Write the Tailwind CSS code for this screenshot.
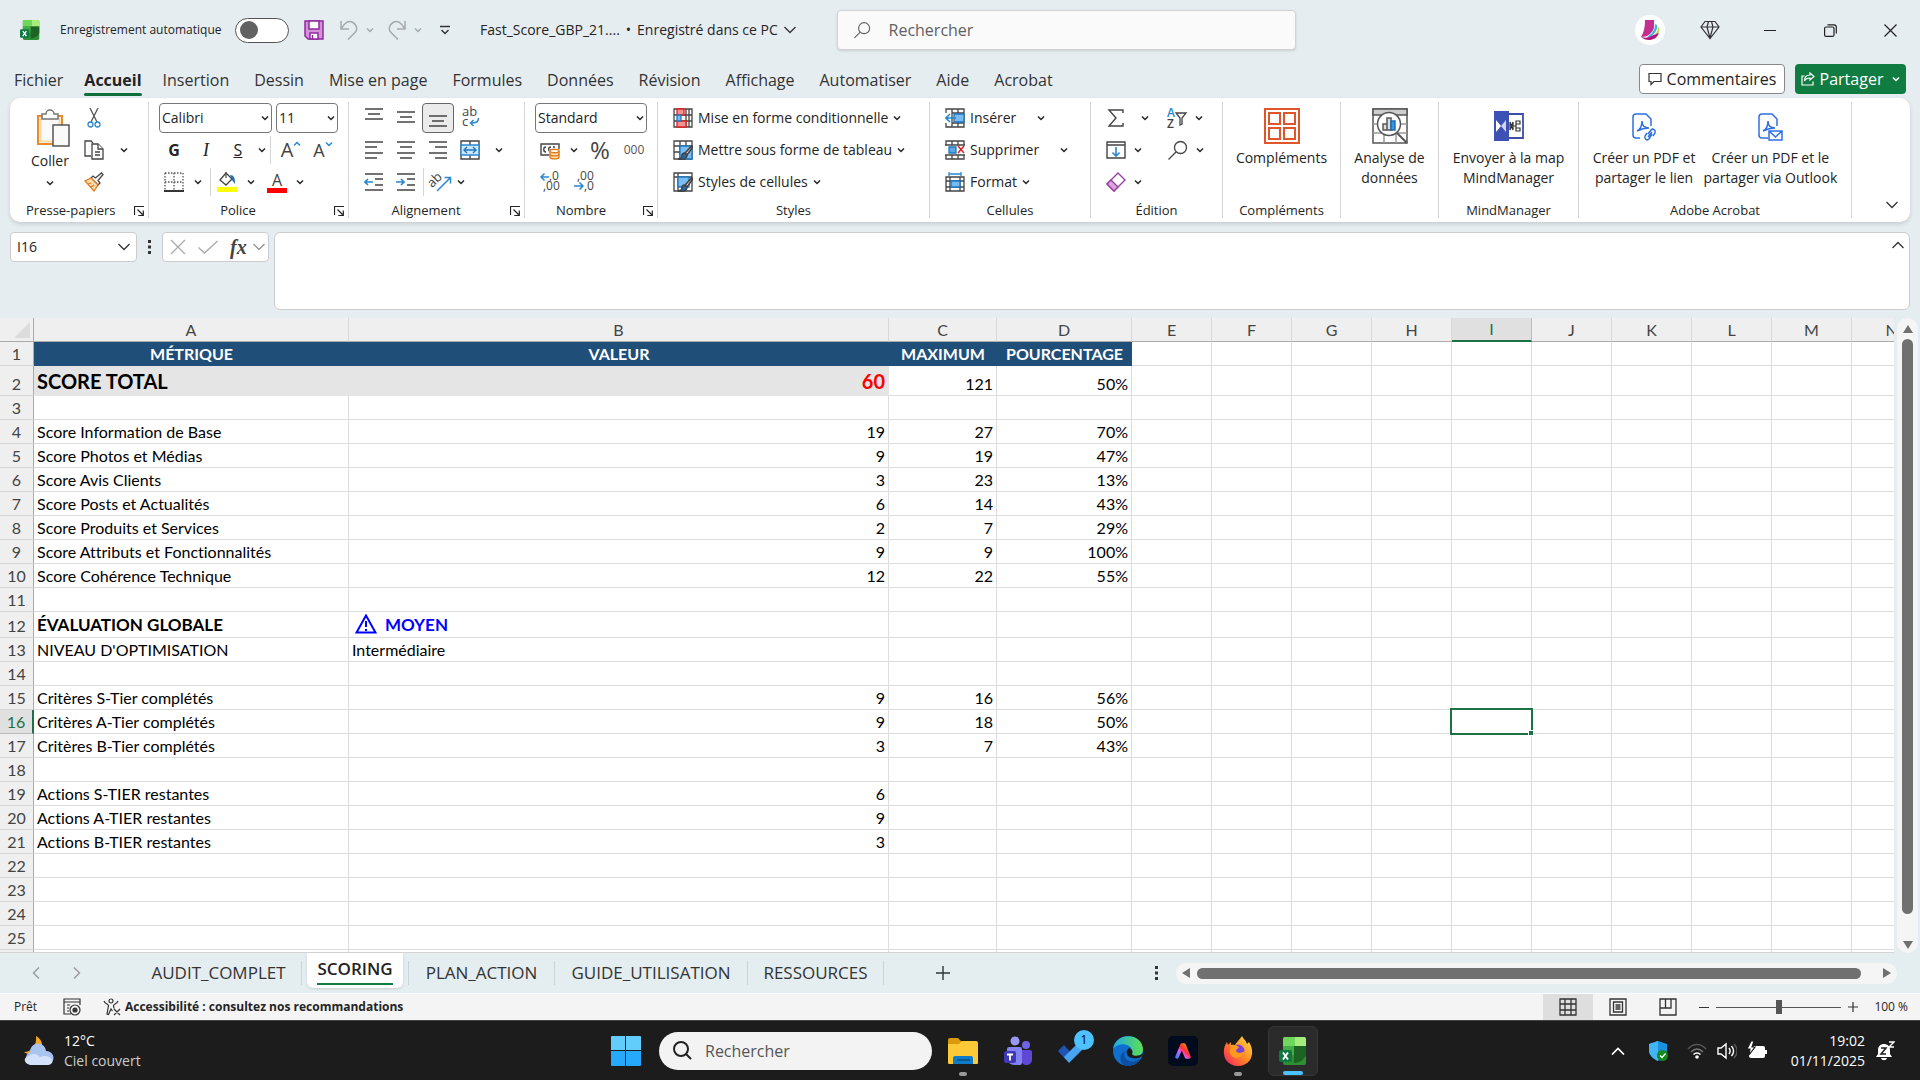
<!DOCTYPE html>
<html lang="fr">
<head>
  <meta charset="UTF-8" />
  <meta name="viewport" content="width=device-width, initial-scale=1.0" />
  <title>Fast_Score_GBP_21 - Excel</title>
  <script src="https://cdn.jsdelivr.net/npm/@tailwindcss/browser@4"></script>
</head>
<body class="flex h-screen flex-col overflow-hidden bg-[#e6edf1] font-['Open_Sans',sans-serif] text-sm text-[#242424]">

  <!-- Symboles réutilisés -->
  <svg class="hidden">
    <symbol id="chev" viewBox="0 0 8 8"><path d="M1 2.5l3 3 3-3" fill="none" stroke="currentColor" stroke-width="1.5" /></symbol>
    <symbol id="launch" viewBox="0 0 10 10"><path d="M.5 9V.5H10M3.500 3.500L9 9M9.300 4.500v5h-5" fill="none" stroke="currentColor" stroke-width="1.200" /></symbol>
    <symbol id="brush" viewBox="0 0 12 12"><path d="M11.500.5L6 6.500l1.500 1.500L12 2z" fill="#fff" stroke="#444" /><path d="M6 6.500c-2 0-2.500 1-2.500 2.500S2 11 .5 11c3 1.500 7 .5 7-3z" fill="#1e6fb8" /></symbol>
    <symbol id="excel" viewBox="0 0 28 28">
      <path d="M6 0h19a2 2 0 0 1 2 2v24a2 2 0 0 1-2 2H6a2 2 0 0 1-2-2V2a2 2 0 0 1 2-2z" fill="#2f8f35" />
      <path d="M4 2a2 2 0 0 1 2-2h10v9H4z" fill="#6fd85c" /><path d="M16 0h9a2 2 0 0 1 2 2v7H16z" fill="#a6ec7c" /><path d="M4 9h11v9H4z" fill="#45ad46" />
      <path d="M15 9h12v9c-2 6-9 8-12 8z" fill="#1c6324" />
      <rect x="0" y="13" width="13" height="12" rx="2" fill="#107840" />
      <path d="M4 15.500l5 7M9 15.500l-5 7" stroke="#fff" stroke-width="1.900" />
    </symbol>
  </svg>

  <!-- Barre de titre -->
  <header class="flex h-[60px] shrink-0 items-center pr-[15px] pl-5">
    <svg class="size-5"><use href="#excel" /></svg>
    <label for="autosave" class="ml-5 w-[175px] text-xs whitespace-nowrap">Enregistrement automatique</label>
    <input id="autosave" type="checkbox" class="peer sr-only" />
    <label for="autosave" class="flex h-[25px] w-[54px] items-center rounded-full border border-[#555] bg-white px-1" aria-label="Enregistrement automatique">
      <span class="size-[18px] rounded-full bg-[#616161]"></span>
    </label>
    <button class="ml-[15px]" aria-label="Enregistrer">
      <svg class="size-5" viewBox="0 0 20 20"><path d="M1 1h18v18H4l-3-3z" fill="#d491d8" stroke="#8e2a9e" stroke-width="1.500" /><path d="M5 1h10v8H5zM6 13h8v6H6z" fill="#fff" stroke="#8e2a9e" stroke-width="1.500" /><path d="M8.500 15v4" stroke="#8e2a9e" stroke-width="1.500" /></svg>
    </button>
    <button class="ml-4 flex items-center gap-2 text-[#a5a9ad]" aria-label="Annuler">
      <svg class="h-5 w-[18px]" viewBox="0 0 18 20" fill="none" stroke="currentColor" stroke-width="1.500"><path d="M1 1v8h8M1.500 8.500C5 2 9 0 13 2.500c4 2.500 5 7 2 10L8 19.500" /></svg>
      <svg class="size-2"><use href="#chev" /></svg>
    </button>
    <button class="ml-[14px] flex items-center gap-2 text-[#a5a9ad]" aria-label="Rétablir">
      <svg class="h-5 w-[18px]" viewBox="0 0 18 20" fill="none" stroke="currentColor" stroke-width="1.500"><path d="M17 1v8H9M16.500 8.500C13 2 9 0 5 2.500c-4 2.500-5 7-2 10L10 19.500" /></svg>
      <svg class="size-2"><use href="#chev" /></svg>
    </button>
    <button class="ml-[18px]" aria-label="Personnaliser la barre d'outils">
      <svg class="size-[10px]" viewBox="0 0 10 10" fill="none" stroke="#333" stroke-width="1.400"><path d="M0 1.500h10M1.500 5L5 8.500 8.500 5" /></svg>
    </button>
    <button class="ml-[30px] flex w-[330px] items-center gap-[6px] whitespace-nowrap">
      <span>Fast_Score_GBP_21....</span><span>•</span><span>Enregistré dans ce PC</span>
      <svg class="size-3" viewBox="0 0 12 8" fill="none" stroke="#333" stroke-width="1.300"><path d="M.5 1L6 6.500 11.500 1" /></svg>
    </button>
    <label class="ml-[27px] flex h-10 w-[459px] items-center gap-[18px] rounded border border-[#d0d3d5] bg-[#fafafa] px-4 shadow-sm">
      <svg class="size-[18px]" viewBox="0 0 18 18" fill="none" stroke="#616161" stroke-width="1.200"><circle cx="11" cy="7" r="6" /><path d="M6.500 11.500L.5 17.500" /></svg>
      <input type="search" placeholder="Rechercher" aria-label="Rechercher" class="w-full text-base outline-none placeholder:text-[#616161]" />
    </label>
    <div class="ml-auto flex items-center gap-[30px]">
      <button class="flex size-[30px] items-center justify-center rounded-full bg-white" aria-label="Compte">
        <svg class="size-[22px]" viewBox="0 0 22 22"><path d="M6 1h9c0 6 1 9-3 13-3 3-6 4-10 4 3-5 4-10 4-17z" fill="#c3308f" /><path d="M16 5c0 6-3 10-8 13h3c5-3 8-8 7-12z" fill="#3fb5e5" /><path d="M19 8c0 5-3 8-7 11h2c4-2 7-6 6-10z" fill="#b5d334" /><path d="M2 18c4 1 7 1 10-1l8-3c-2 5-6 7-10 7-3 0-6-1-8-3z" fill="#b0157f" /></svg>
      </button>
      <button class="flex w-[30px] justify-center" aria-label="Premium">
        <svg class="size-5" viewBox="0 0 20 20" fill="none" stroke="#333" stroke-width="1.200"><path d="M5 1.500h10l4 5.500-9 11.500L1 7zM1 7h18M7 7l3 11 3-11-1.500-5.500M7 7l1.500-5.500" /></svg>
      </button>
      <button class="flex w-[30px] justify-center" aria-label="Réduire"><span class="h-px w-3 bg-[#222]"></span></button>
      <button class="flex w-[30px] justify-center" aria-label="Restaurer">
        <svg class="size-[13px]" viewBox="0 0 13 13" fill="none" stroke="#222" stroke-width="1.200"><rect x=".6" y="3" width="9.400" height="9.400" rx="1.500" /><path d="M3.500.8h6.500a2.300 2.300 0 0 1 2.300 2.300v6.400" /></svg>
      </button>
      <button class="flex w-[30px] justify-center" aria-label="Fermer">
        <svg class="size-[13px]" viewBox="0 0 13 13" stroke="#222" stroke-width="1.200"><path d="M.5.5l12 12M12.500.5l-12 12" /></svg>
      </button>
    </div>
  </header>

  <!-- Onglets du ruban -->
  <nav class="flex h-[38px] shrink-0 items-center justify-between pr-[14px] pl-[14px]">
    <div class="flex h-full items-center gap-[25px] pt-px text-base whitespace-nowrap text-[#333]">
      <a href="#">Fichier</a>
      <a href="#" class="relative -mx-1 font-bold text-[#222]">Accueil<span class="absolute inset-x-0 -bottom-1 h-[3px] rounded bg-[#0f703b]"></span></a>
      <a href="#">Insertion</a>
      <a href="#">Dessin</a>
      <a href="#">Mise en page</a>
      <a href="#">Formules</a>
      <a href="#">Données</a>
      <a href="#">Révision</a>
      <a href="#">Affichage</a>
      <a href="#">Automatiser</a>
      <a href="#">Aide</a>
      <a href="#">Acrobat</a>
    </div>
    <div class="flex gap-[10px] text-base">
      <button class="flex h-[30px] w-[146px] items-center justify-center gap-[5px] rounded border border-[#888] bg-white">
        <svg class="size-[14px]" viewBox="0 0 14 14" fill="none" stroke="#333" stroke-width="1.200"><path d="M1 1.500h12v8H6L3 12.500v-3H1z" /></svg>Commentaires
      </button>
      <button class="flex h-[30px] w-[111px] items-center justify-center gap-[5px] rounded bg-[#107c41] text-white">
        <svg class="size-[14px]" viewBox="0 0 14 14" fill="none" stroke="#fff" stroke-width="1.200"><path d="M3.500 4H1v9h11V9.500M9 1l4 3.500L9 8V6C6 6 4.500 7 3.500 9c0-4 2-6 5.500-6z" /></svg>Partager
        <svg class="ml-1 size-2"><use href="#chev" /></svg>
      </button>
    </div>
  </nav>

  <!-- Ruban -->
  <section class="mx-[10px] flex h-[124px] shrink-0 rounded-[10px] bg-white py-1 whitespace-nowrap shadow-[0_2px_4px_rgba(0,0,0,0.14)]">

    <!-- Presse-papiers -->
    <div class="flex w-[139px] shrink-0 flex-col border-r border-[#d5d5d5]">
      <div class="flex h-24 pl-[14px]">
        <button class="flex w-[52px] flex-col items-center pt-[7px]">
          <svg class="ml-[6px] h-[38px] w-[34px]" viewBox="0 0 34 38"><path d="M2 7h24v28H2z" fill="#fff" stroke="#e8892b" stroke-width="2" /><path d="M4.500 9.500h19v23h-19z" fill="#fafafa" stroke="#fbd9a5" stroke-width="2" /><path d="M6 10V5h4a4 4 0 0 1 8 0h4v5z" fill="#fff" stroke="#777" stroke-width="1.500" /><path d="M17 16h16v21H17z" fill="#fafafa" stroke="#555" stroke-width="1.500" /></svg>
          <span class="mt-1 leading-5">Coller</span>
          <svg class="mt-2 size-2"><use href="#chev" /></svg>
        </button>
        <div class="flex flex-col pl-[6px]">
          <button class="flex h-8 w-6 items-center justify-center" aria-label="Couper">
            <svg class="h-5 w-[14px]" viewBox="0 0 14 20" fill="none" stroke-width="1.300"><path d="M3 0l7 14M11 0L4 14" stroke="#555" /><circle cx="3.500" cy="16.500" r="2.500" stroke="#2b88cf" /><circle cx="10.500" cy="16.500" r="2.500" stroke="#2b88cf" /></svg>
          </button>
          <div class="flex h-8 items-center gap-[14px]">
            <button class="flex w-6 items-center justify-center" aria-label="Copier">
              <svg class="size-5" viewBox="0 0 20 20" fill="#fff" stroke="#444" stroke-width="1.300"><path d="M7 16H1V1h6l2 2" /><path d="M8 4h6l5 5v10H8z" /><path d="M14 4v5h5M11 12h5M11 15h5" /></svg>
            </button>
            <svg class="size-2"><use href="#chev" /></svg>
          </div>
          <button class="flex h-8 w-6 items-center justify-center" aria-label="Reproduire la mise en forme">
            <svg class="size-5" viewBox="0 0 20 20" fill="#fff" stroke-width="1.300"><path d="M19 2.500L17.500 1l-6 5L9 4 7 6l7 7 2-2-2-2.500z" stroke="#444" /><path d="M7 6L1 9l9 10 4-6z" fill="#fbdcae" stroke="#e07b1a" /><path d="M4 12l3-1M7 15l3-2" stroke="#e07b1a" /></svg>
          </button>
        </div>
      </div>
      <div class="flex h-5 items-end justify-between pr-1 pl-4 text-[13px] leading-4">Presse-papiers<button class="pb-[2px]" aria-label="Options du presse-papiers"><svg class="size-[10px]"><use href="#launch" /></svg></button></div>
    </div>

    <!-- Police -->
    <div class="flex w-[200px] shrink-0 flex-col border-r border-[#d5d5d5]">
      <div class="flex h-8 items-center gap-1 px-[10px]">
        <div class="relative flex-1">
          <select aria-label="Police" class="h-[30px] w-full appearance-none rounded border border-[#777] bg-white px-[2px]"><option>Calibri</option></select>
          <svg class="pointer-events-none absolute top-[11px] right-[3px] size-2"><use href="#chev" /></svg>
        </div>
        <div class="relative">
          <select aria-label="Taille de police" class="h-[30px] w-[62px] appearance-none rounded border border-[#777] bg-white px-[2px]"><option>11</option></select>
          <svg class="pointer-events-none absolute top-[11px] right-[3px] size-2"><use href="#chev" /></svg>
        </div>
      </div>
      <div class="flex h-8 items-center pl-[9px] text-base">
        <button class="w-8 font-bold">G</button>
        <button class="w-8 font-['Liberation_Serif',serif] text-lg italic">I</button>
        <button class="w-8 underline">S</button>
        <svg class="mx-1 size-2"><use href="#chev" /></svg>
        <span class="mr-1 h-7 w-px bg-[#d5d5d5]"></span>
        <button class="flex w-8 justify-center text-xl text-[#444]" aria-label="Augmenter la taille">A<svg class="mt-1 size-2 rotate-180 text-[#2b88cf]"><use href="#chev" /></svg></button>
        <button class="flex w-8 justify-center text-lg text-[#444]" aria-label="Réduire la taille">A<svg class="mt-1 size-2 text-[#2b88cf]"><use href="#chev" /></svg></button>
      </div>
      <div class="flex h-8 items-center pl-[9px]">
        <button class="flex w-8 justify-center" aria-label="Bordures">
          <svg class="size-5" viewBox="0 0 20 20" fill="none" stroke="#555" stroke-width="1.300"><path d="M1 1h18v18M1 1v18M10 1v18M1 10h18" stroke-dasharray="1.500 1.500" /><path d="M0 19h20" stroke="#333" stroke-width="2" /></svg>
        </button>
        <svg class="mx-1 size-2"><use href="#chev" /></svg>
        <span class="mx-1 h-7 w-px bg-[#d5d5d5]"></span>
        <button class="flex w-6 justify-center" aria-label="Couleur de remplissage">
          <svg class="size-5" viewBox="0 0 20 20" fill="none"><path d="M9 1l6 6-6 6-6-5z" stroke="#444" stroke-width="1.300" fill="#fff" /><path d="M9 0v6" stroke="#444" stroke-width="1.200" /><path d="M13 3c4 0 5 3 5 9l-3-4z" fill="#1e6fb8" /><path d="M0 15h20v5H0z" fill="#ff0" /></svg>
        </button>
        <svg class="mr-3 ml-2 size-2"><use href="#chev" /></svg>
        <button class="flex w-5 flex-col items-center text-[#444]" aria-label="Couleur de police"><span class="text-base leading-4">A</span><span class="h-[5px] w-5 bg-[#f00]"></span></button>
        <svg class="ml-[9px] size-2"><use href="#chev" /></svg>
      </div>
      <div class="flex h-5 items-end justify-between pr-1 text-[13px] leading-4"><span class="w-[178px] text-center">Police</span><button class="pb-[2px]" aria-label="Options de police"><svg class="size-[10px]"><use href="#launch" /></svg></button></div>
    </div>

    <!-- Alignement -->
    <div class="flex w-[176px] shrink-0 flex-col border-r border-[#d5d5d5]">
      <div class="flex h-8 items-center pl-[9px]">
        <button class="flex w-8 justify-center" aria-label="Aligner en haut"><svg class="size-5" viewBox="0 0 20 20" stroke="#444" stroke-width="1.400"><path d="M1 1h18M4 6h12M1 11h18" /></svg></button>
        <button class="flex w-8 justify-center" aria-label="Aligner au centre verticalement"><svg class="size-5" viewBox="0 0 20 20" stroke="#444" stroke-width="1.400"><path d="M1 4h18M4 9h12M1 14h18" /></svg></button>
        <button class="flex h-[30px] w-8 items-center justify-center rounded border border-[#666] bg-[#ebebeb]" aria-label="Aligner en bas"><svg class="size-5" viewBox="0 0 20 20" stroke="#444" stroke-width="1.400"><path d="M1 8h18M4 13h12M1 18h18" /></svg></button>
        <button class="flex w-8 justify-center text-[#444]" aria-label="Renvoyer à la ligne"><svg class="size-5 overflow-visible" viewBox="0 0 20 20" fill="none"><text x="2" y="8" font-size="13" fill="#444">ab</text><text x="2" y="18" font-size="13" fill="#444">c</text><path d="M18.500 10c0 4-2 5-8 5M13.500 12l-3 3 3 3" stroke="#2b88cf" stroke-width="1.500" /></svg></button>
      </div>
      <div class="flex h-8 items-center pl-[9px]">
        <button class="flex w-8 justify-center" aria-label="Aligner à gauche"><svg class="size-5" viewBox="0 0 20 20" stroke="#444" stroke-width="1.400"><path d="M1 2h18M1 7h12M1 13h18M1 18h12" /></svg></button>
        <button class="flex w-8 justify-center" aria-label="Centrer"><svg class="size-5" viewBox="0 0 20 20" stroke="#444" stroke-width="1.400"><path d="M1 2h18M4 7h12M1 13h18M4 18h12" /></svg></button>
        <button class="flex w-8 justify-center" aria-label="Aligner à droite"><svg class="size-5" viewBox="0 0 20 20" stroke="#444" stroke-width="1.400"><path d="M1 2h18M7 7h12M1 13h18M7 18h12" /></svg></button>
        <button class="flex w-8 justify-center" aria-label="Fusionner et centrer"><svg class="size-5" viewBox="0 0 20 20" fill="none" stroke="#444" stroke-width="1.400"><path d="M1 1h18v18H1zM10 1v4M10 15v4" /><path d="M1 5h18v10H1z" fill="#cfe6f8" stroke="#2b88cf" /><path d="M4 10h12M7 7l-3 3 3 3M13 7l3 3-3 3" stroke="#1e78c0" /></svg></button>
        <svg class="ml-[9px] size-2"><use href="#chev" /></svg>
      </div>
      <div class="flex h-8 items-center pl-[9px]">
        <button class="flex w-8 justify-center" aria-label="Diminuer le retrait"><svg class="size-5" viewBox="0 0 20 20" fill="none" stroke="#444" stroke-width="1.400"><path d="M1 2h18M11 7h8M11 13h8M1 18h18" /><path d="M9 10H1M4 7l-3 3 3 3" stroke="#2b88cf" stroke-width="1.700" /></svg></button>
        <button class="flex w-8 justify-center" aria-label="Augmenter le retrait"><svg class="size-5" viewBox="0 0 20 20" fill="none" stroke="#444" stroke-width="1.400"><path d="M1 2h18M11 7h8M11 13h8M1 18h18" /><path d="M0 10h8M5 7l3 3-3 3" stroke="#2b88cf" stroke-width="1.700" /></svg></button>
        <span class="mx-[1px] h-7 w-px bg-[#d5d5d5]"></span>
        <button class="flex w-8 justify-center" aria-label="Orientation"><svg class="size-5 overflow-visible" viewBox="0 0 20 20" fill="none"><text x="-1" y="13" font-size="13" fill="#444" transform="rotate(-45 4 12)">ab</text><path d="M6 19L19 6M13.500 5.500H19.500v6" stroke="#2b88cf" stroke-width="1.500" /></svg></button>
        <svg class="size-2"><use href="#chev" /></svg>
      </div>
      <div class="flex h-5 items-end justify-between pr-1 text-[13px] leading-4"><span class="w-[154px] text-center">Alignement</span><button class="pb-[2px]" aria-label="Options d'alignement"><svg class="size-[10px]"><use href="#launch" /></svg></button></div>
    </div>

    <!-- Nombre -->
    <div class="flex w-[133px] shrink-0 flex-col border-r border-[#d5d5d5]">
      <div class="flex h-8 items-center px-[10px]">
        <div class="relative w-full">
          <select aria-label="Format de nombre" class="h-[30px] w-full appearance-none rounded border border-[#777] bg-white px-[2px]"><option>Standard</option></select>
          <svg class="pointer-events-none absolute top-[11px] right-[3px] size-2"><use href="#chev" /></svg>
        </div>
      </div>
      <div class="flex h-8 items-center pl-[9px]">
        <button class="flex w-8 justify-center" aria-label="Format comptable"><svg class="size-5" viewBox="0 0 20 20" fill="none" stroke="#444" stroke-width="1.400"><path d="M9 15H1V4h18v5" /><path d="M6 7C3 7 3 12 6 12M11 7c-2 0-3 1-2 4M15 7h-2" /><path d="M10 11v6c0 2.500 9 2.500 9 0v-6" fill="#fbdcae" stroke="#e07b1a" /><ellipse cx="14.500" cy="11" rx="4.500" ry="1.700" fill="#fff" stroke="#e07b1a" /><path d="M10 14c0 2.500 9 2.500 9 0" stroke="#e07b1a" /></svg></button>
        <svg class="mx-1 size-2"><use href="#chev" /></svg>
        <button class="w-9 text-center text-2xl leading-6 text-[#444]">%</button>
        <button class="w-8 text-xs text-[#555]">000</button>
      </div>
      <div class="flex h-8 items-center pl-[9px]">
        <button class="flex w-8 justify-center" aria-label="Ajouter une décimale"><svg class="size-5 overflow-visible" viewBox="0 0 20 20"><text x="9" y="8" font-size="12" fill="#444">,0</text><text x="3" y="18" font-size="12" fill="#444">,00</text><path d="M9 5H1M4.500 1.500L1 5l3.500 3.500" fill="none" stroke="#2b88cf" stroke-width="1.500" /></svg></button>
        <button class="flex w-9 justify-center" aria-label="Réduire les décimales"><svg class="size-5 overflow-visible" viewBox="0 0 20 20"><text x="3" y="8" font-size="12" fill="#444">,00</text><text x="10" y="18" font-size="12" fill="#444">,0</text><path d="M0 14h9M5.500 10.500L9 14l-3.500 3.500" fill="none" stroke="#2b88cf" stroke-width="1.500" /></svg></button>
      </div>
      <div class="flex h-5 items-end justify-between pr-1 text-[13px] leading-4"><span class="w-[112px] text-center">Nombre</span><button class="pb-[2px]" aria-label="Options de nombre"><svg class="size-[10px]"><use href="#launch" /></svg></button></div>
    </div>

    <!-- Styles -->
    <div class="flex w-[272px] shrink-0 flex-col border-r border-[#d5d5d5]">
      <button class="flex h-8 items-center gap-[5px] pl-[15px]">
        <svg class="size-5" viewBox="0 0 20 20" fill="none" stroke="#444" stroke-width="1.300"><path d="M1 1h18v18H1zM1 7h18M1 13h18M13 1v18M16 1v18" /><path d="M4 1h7v6H4zM4 13h9v6H4z" fill="#f79292" stroke="#e02020" /><path d="M4 7h4v6H4z" fill="#7bbdf0" stroke="#1e78c0" /></svg>
        Mise en forme conditionnelle<svg class="size-2"><use href="#chev" /></svg>
      </button>
      <button class="flex h-8 items-center gap-[5px] pl-[15px]">
        <svg class="size-5" viewBox="0 0 20 20" fill="none" stroke="#444" stroke-width="1.300"><path d="M1 1h18v18H1zM1 6h18M1 12h6M7 1v18M13 1v5" /><path d="M7 6h12v13H7z" fill="#7bbdf0" stroke="#1e78c0" /><use href="#brush" x="4" y="5" width="16" height="15" /></svg>
        Mettre sous forme de tableau<svg class="size-2"><use href="#chev" /></svg>
      </button>
      <button class="flex h-8 items-center gap-[5px] pl-[15px]">
        <svg class="size-5" viewBox="0 0 20 20" fill="none" stroke="#444" stroke-width="1.300"><path d="M1 1h18v18H1zM1 5h18M5 1v18" /><path d="M5 5h11v10H5z" fill="#7bbdf0" stroke="#1e78c0" /><use href="#brush" x="4" y="5" width="16" height="15" /></svg>
        Styles de cellules<svg class="size-2"><use href="#chev" /></svg>
      </button>
      <div class="flex h-5 items-end justify-center text-[13px] leading-4">Styles</div>
    </div>

    <!-- Cellules -->
    <div class="flex w-[161px] shrink-0 flex-col border-r border-[#d5d5d5]">
      <button class="flex h-8 items-center gap-[5px] pl-[15px]">
        <svg class="size-5" viewBox="0 0 20 20" fill="none" stroke="#444" stroke-width="1.300"><path d="M1 5V1h18v18H1v-4M7 1v18M13 1v18M7 5h12M7 15h12" /><path d="M9 6h10v8H9z" fill="#7bbdf0" stroke="#1e78c0" /><path d="M11 10H1M5 6l-4 4 4 4" stroke="#1e88d0" stroke-width="1.600" /></svg>
        Insérer<svg class="ml-4 size-2"><use href="#chev" /></svg>
      </button>
      <button class="flex h-8 items-center gap-[5px] pl-[15px]">
        <svg class="size-5" viewBox="0 0 20 20" fill="none" stroke="#444" stroke-width="1.300"><path d="M1 5V1h18v4M1 15v4h18v-4M7 1v4M13 1v4M7 15v4M13 15v4M0 5h20M0 15h20" /><path d="M4 7h7v6H4z" fill="#5ba8e5" stroke="#1e78c0" /><path d="M13 6l6 7M19 6l-6 7" stroke="#e02020" stroke-width="1.500" /></svg>
        Supprimer<svg class="ml-4 size-2"><use href="#chev" /></svg>
      </button>
      <button class="flex h-8 items-center gap-[5px] pl-[15px]">
        <svg class="size-5" viewBox="0 0 20 20" fill="none" stroke="#444" stroke-width="1.300"><path d="M1 5h18v14H1zM5 5v14M15 5v14M1 9h18M1 15h18" /><path d="M6 9h9v6H6z" fill="#7bbdf0" stroke="#1e78c0" /><path d="M4 2h12M4 0v4M16 0v4" stroke="#2b88cf" /></svg>
        Format<svg class="size-2"><use href="#chev" /></svg>
      </button>
      <div class="flex h-5 items-end justify-center text-[13px] leading-4">Cellules</div>
    </div>

    <!-- Édition -->
    <div class="flex w-[132px] shrink-0 flex-col border-r border-[#d5d5d5]">
      <div class="flex h-8 items-center pl-4">
        <button aria-label="Somme automatique"><svg class="size-[18px]" viewBox="0 0 18 18" fill="none" stroke="#444" stroke-width="1.400"><path d="M16 4V1H2l7 8-7 8h14v-3" /></svg></button>
        <svg class="ml-4 size-2"><use href="#chev" /></svg>
        <button class="ml-[18px]" aria-label="Trier et filtrer"><svg class="size-5 overflow-visible" viewBox="0 0 20 20" fill="none"><text x="0" y="9" font-size="12" font-weight="600" fill="#2b88cf">A</text><text x="0" y="20" font-size="12" font-weight="600" fill="#444">Z</text><path d="M9 5h10l-4 5v6l-2 1v-7z" stroke="#444" stroke-width="1.300" /></svg></button>
        <svg class="ml-2 size-2"><use href="#chev" /></svg>
      </div>
      <div class="flex h-8 items-center pl-[15px]">
        <button aria-label="Remplissage"><svg class="size-5" viewBox="0 0 20 20" fill="none" stroke="#444" stroke-width="1.400"><path d="M1 2h18v16H1zM1 5h18" /><path d="M10 7v9M6.500 12.500L10 16l3.500-3.500" stroke="#2b88cf" stroke-width="1.600" /></svg></button>
        <svg class="ml-2 size-2"><use href="#chev" /></svg>
        <button class="ml-[26px]" aria-label="Rechercher et sélectionner"><svg class="size-5" viewBox="0 0 20 20" fill="none" stroke="#444" stroke-width="1.300"><circle cx="12.500" cy="7.500" r="6" /><path d="M8 12l-7.500 7.500" /></svg></button>
        <svg class="ml-2 size-2"><use href="#chev" /></svg>
      </div>
      <div class="flex h-8 items-center pl-[15px]">
        <button aria-label="Effacer"><svg class="size-5" viewBox="0 0 20 20" stroke="#9b3fa5" stroke-width="1.400"><path d="M12 1l7 7L8 19l-7-7z" fill="#fff" /><path d="M5 8l7 7-4 4-7-7z" fill="#d9a4de" /></svg></button>
        <svg class="ml-2 size-2"><use href="#chev" /></svg>
      </div>
      <div class="flex h-5 items-end justify-center text-[13px] leading-4">Édition</div>
    </div>

    <!-- Compléments -->
    <div class="flex w-[118px] shrink-0 flex-col border-r border-[#d5d5d5]">
      <button class="flex h-24 flex-col items-center pt-[6px] leading-5">
        <svg class="mb-1 size-9" viewBox="0 0 36 36" fill="none" stroke="#e0562b" stroke-width="2"><path d="M1 1h34v34H1zM5 5h11v11H5zM20 5h11v11H20zM5 20h11v11H5zM20 20h11v11H20z" /></svg>
        Compléments
      </button>
      <div class="flex h-5 items-end justify-center text-[13px] leading-4">Compléments</div>
    </div>

    <!-- Analyse -->
    <div class="flex w-[98px] shrink-0 flex-col border-r border-[#d5d5d5]">
      <button class="flex h-24 flex-col items-center pt-[6px] leading-5">
        <svg class="mb-1 size-9" viewBox="0 0 36 36" fill="none" stroke="#555" stroke-width="1.500"><path d="M1 1h34v34H1z" fill="#fff" /><path d="M1 1h34v6H1z" fill="#ccc" /><path d="M1 16h34M1 25h34M12 7v28M24 7v28" stroke="#999" /><circle cx="17" cy="16" r="11.500" fill="#fff" /><path d="M25 25l10 10" stroke-width="2" /><path d="M11 16h4v6h-4zM15 10h4v12h-4z" fill="#ddd" /><path d="M19 13h4v9h-4z" fill="#3a96dd" stroke="#1e6fb8" /></svg>
        <span>Analyse de<br />données</span>
      </button>
    </div>

    <!-- MindManager -->
    <div class="flex w-[140px] shrink-0 flex-col border-r border-[#d5d5d5]">
      <button class="flex h-24 flex-col items-center pt-[6px] leading-5">
        <svg class="mb-1 size-9" viewBox="0 0 36 36"><path d="M17 6h15v24H17z" fill="#fff" stroke="#3b4fa8" stroke-width="1.800" /><path d="M3 3h15v30H3z" fill="#3d51b5" /><path d="M5 12l5 6-5 6z" fill="#fff" /><path d="M15 12l-5 6 5 6z" fill="#cfd5f2" /><path d="M19 14l3 8v-8l-3 8zM22 18h3M25 13v10M25 13h4v3h-4zM25 20h4v3h-4z" fill="none" stroke="#333" stroke-width="1.200" /></svg>
        <span>Envoyer à la map<br />MindManager</span>
      </button>
      <div class="flex h-5 items-end justify-center text-[13px] leading-4">MindManager</div>
    </div>

    <!-- Adobe Acrobat -->
    <div class="flex w-[273px] shrink-0 flex-col border-r border-[#d5d5d5]">
      <div class="flex h-24 justify-center gap-2 leading-5">
        <button class="flex flex-col items-center pt-[10px]">
          <svg class="ml-1 size-9" viewBox="0 0 36 36" fill="none" stroke="#2f6fe4" stroke-width="1.500"><path d="M12 26H8a3 3 0 0 1-3-3V5a3 3 0 0 1 3-3h10l5 5v7" /><path d="M9 19c4-2 5-6 5-10 0 5 3 7 7 7-5 0-8 1-12 3z" /><path d="M20 22l3-4c2-2 5 0 4 3l-2 3M24 22l-3 5c-2 2-5 0-4-3l2-3M20 25l4-5" /></svg>
          <span>Créer un PDF et<br />partager le lien</span>
        </button>
        <button class="flex flex-col items-center pt-[10px]">
          <svg class="ml-1 size-9" viewBox="0 0 36 36" fill="none" stroke="#2f6fe4" stroke-width="1.500"><path d="M14 26H8a3 3 0 0 1-3-3V5a3 3 0 0 1 3-3h10l5 5v7" /><path d="M9 19c4-2 5-6 5-10 0 5 3 7 7 7-5 0-8 1-12 3z" /><path d="M15 19h13v9H15zM15 19l6.500 6 6.500-6" fill="#fff" /></svg>
          <span>Créer un PDF et le<br />partager via Outlook</span>
        </button>
      </div>
      <div class="flex h-5 items-end justify-center text-[13px] leading-4">Adobe Acrobat</div>
    </div>
    <div class="flex flex-1 items-end justify-end pr-3 pb-[9px]">
      <button aria-label="Réduire le ruban"><svg class="h-2 w-3" viewBox="0 0 12 8" fill="none" stroke="#333" stroke-width="1.300"><path d="M.5 1L6 6.500 11.500 1" /></svg></button>
    </div>
  </section>

  <!-- Barre de formule -->
  <section class="flex h-24 shrink-0 items-start px-[10px] pt-[10px]">
    <div class="flex h-[30px] w-[127px] items-center justify-between rounded border border-[#ccc] bg-white pr-[6px] pl-[6px]">
      <input aria-label="Zone Nom" value="I16" class="w-20 text-sm outline-none" />
      <svg class="h-2 w-3" viewBox="0 0 12 8" fill="none" stroke="#333" stroke-width="1.300"><path d="M.5 1L6 6.500 11.500 1" /></svg>
    </div>
    <svg class="mr-[10px] ml-[11px] mt-2 h-[14px] w-1 fill-[#333]" viewBox="0 0 4 14"><path d="M0 0h3v3H0zM0 5.500h3v3H0zM0 11h3v3H0z" /></svg>
    <div class="flex h-[30px] w-[107px] items-center rounded border border-[#ccc] bg-white pl-[7px]">
      <button aria-label="Annuler la saisie"><svg class="size-4" viewBox="0 0 16 16" stroke="#aaa" stroke-width="1.300"><path d="M1 1l14 14M15 1L1 15" /></svg></button>
      <button class="ml-3" aria-label="Entrer"><svg class="h-[14px] w-5" viewBox="0 0 20 14" fill="none" stroke="#aaa" stroke-width="1.300"><path d="M.5 7.500l6 5.500L19.500 1" /></svg></button>
      <button class="ml-3 font-['Liberation_Serif',serif] text-xl leading-6 font-bold text-[#444] italic" aria-label="Insérer une fonction">fx</button>
      <svg class="ml-[6px] h-2 w-3" viewBox="0 0 12 8" fill="none" stroke="#888" stroke-width="1.200"><path d="M.5 1L6 6.500 11.500 1" /></svg>
    </div>
    <div class="ml-[5px] flex h-[78px] flex-1 items-start rounded-md border border-[#ccc] bg-white">
      <textarea aria-label="Barre de formule" class="h-full flex-1 resize-none px-2 outline-none"></textarea>
      <button class="mt-2 mr-[5px] flex" aria-label="Réduire la barre de formule"><svg class="h-2 w-3" viewBox="0 0 12 8" fill="none" stroke="#333" stroke-width="1.300"><path d="M.5 7L6 1.500 11.500 7" /></svg></button>
    </div>
  </section>

  <!-- Feuille -->
  <main class="flex min-h-0 flex-1">
    <div class="min-w-0 flex-1 overflow-hidden border-b border-[#d4d4d4] bg-white">
      <table class="w-[1932px] table-fixed border-separate border-spacing-0 font-['Lato',sans-serif] text-base leading-5 text-black [font-variant-ligatures:none]">
        <colgroup>
          <col class="w-[34px]" /><col class="w-[315px]" /><col class="w-[540px]" /><col class="w-[108px]" /><col class="w-[135px]" />
          <col /><col /><col /><col /><col /><col /><col /><col /><col /><col />
        </colgroup>
        <thead><tr id="colonnes" class="h-6"></tr></thead>
        <tbody id="lignes"></tbody>
      </table>
    </div>
    <div class="mr-[2px] ml-[3px] flex w-[21px] flex-col items-center rounded-full bg-[#f5f5f5] pt-[7px] pb-1">
      <svg class="h-2 w-[10px] fill-[#707070]" viewBox="0 0 10 8"><path d="M5 0l5 8H0z" /></svg>
      <div class="mt-[6px] mb-[27px] w-[11px] flex-1 rounded-full bg-[#707070]"></div>
      <svg class="h-2 w-[10px] fill-[#707070]" viewBox="0 0 10 8"><path d="M5 8L0 0h10z" /></svg>
    </div>
  </main>

  <!-- Onglets des feuilles -->
  <nav class="flex h-10 shrink-0 items-center justify-between bg-[#e4edf0] pr-[23px] pl-[32px] text-[17px] whitespace-nowrap text-[#333]">
    <div class="flex h-full items-center">
      <button class="mr-[33px]" aria-label="Feuille précédente"><svg class="h-3 w-2" viewBox="0 0 8 12" fill="none" stroke="#999" stroke-width="1.400"><path d="M7 .5L1.500 6 7 11.500" /></svg></button>
      <button aria-label="Feuille suivante"><svg class="h-3 w-2" viewBox="0 0 8 12" fill="none" stroke="#999" stroke-width="1.400"><path d="M1 .5L6.500 6 1 11.500" /></svg></button>
      <a href="#" class="ml-[55px] flex h-6 w-[166px] items-center justify-center border-r border-[#ccd2d5]">AUDIT_COMPLET</a>
      <a href="#" class="mx-[5px] flex h-full w-[96px] justify-center self-start rounded-b-md pb-[5px] font-semibold text-[#222]"><span class="flex h-full w-full justify-center rounded-b-md bg-white shadow-sm"><span class="mt-1 h-7 border-b-2 border-[#107c41] leading-6">SCORING</span></span></a>
      <a href="#" class="flex h-6 w-[147px] items-center justify-center border-x border-[#ccd2d5]">PLAN_ACTION</a>
      <a href="#" class="flex h-6 w-[193px] items-center justify-center border-r border-[#ccd2d5]">GUIDE_UTILISATION</a>
      <a href="#" class="flex h-6 w-[136px] items-center justify-center border-r border-[#ccd2d5]">RESSOURCES</a>
      <button class="ml-[52px]" aria-label="Nouvelle feuille"><svg class="size-[14px]" viewBox="0 0 14 14" stroke="#333" stroke-width="1.400"><path d="M7 0v14M0 7h14" /></svg></button>
    </div>
    <div class="flex items-center">
      <svg class="mr-[17px] h-[14px] w-1 fill-[#333]" viewBox="0 0 4 14"><path d="M0 0h3v3H0zM0 5.500h3v3H0zM0 11h3v3H0z" /></svg>
      <div class="flex h-[21px] w-[721px] items-center rounded-full bg-[#f5f5f5] px-[6px]">
        <svg class="h-[10px] w-2 fill-[#707070]" viewBox="0 0 8 10"><path d="M0 5l8-5v10z" /></svg>
        <div class="mr-[22px] ml-[7px] h-[11px] flex-1 rounded-full bg-[#707070]"></div>
        <svg class="h-[10px] w-2 fill-[#707070]" viewBox="0 0 8 10"><path d="M8 5L0 0v10z" /></svg>
      </div>
    </div>
  </nav>

  <!-- Barre d'état -->
  <section class="flex h-[27px] shrink-0 items-center justify-between border-t border-white bg-[#f4f4f4] pr-3 pl-[14px] text-xs whitespace-nowrap">
    <div class="flex items-center">
      <span class="w-[49px]">Prêt</span>
      <svg class="size-[18px]" viewBox="0 0 18 18" fill="none" stroke="#333" stroke-width="1.200"><path d="M8 16H1V1h16v6M1 4h16M4 7h3M4 10h2M4 13h2" /><circle cx="12" cy="12" r="5" /><circle cx="12" cy="12" r="2" fill="#333" /></svg>
      <button class="ml-[22px] flex items-center gap-1 font-bold">
        <svg class="size-[18px]" viewBox="0 0 18 18" fill="none" stroke="#333" stroke-width="1.200"><circle cx="8" cy="3" r="2" /><path d="M1 3c1 3 4 3 4.500 4.500L4 16l1.500.5L8 11l1.500 2M15 3c-1 3-4 3-4.500 4.500l.5 3M11 11l6 6M17 11l-6 6" /></svg>
        Accessibilité : consultez nos recommandations
      </button>
    </div>
    <div class="flex h-full items-center">
      <button class="flex h-full w-[50px] items-center justify-center bg-[#dedede]" aria-label="Normal"><svg class="size-[18px]" viewBox="0 0 18 18" fill="none" stroke="#333" stroke-width="1.300"><path d="M1 1h16v16H1zM6 1v16M12 1v16M1 6h16M1 12h16" /></svg></button>
      <button class="flex h-full w-[50px] items-center justify-center" aria-label="Mise en page"><svg class="size-[18px]" viewBox="0 0 18 18" fill="none" stroke="#333" stroke-width="1.300"><path d="M1 1h16v16H1zM4.500 4h9v10h-9zM6.500 7h5M6.500 9h5M6.500 11h5" /></svg></button>
      <button class="flex h-full w-[50px] items-center justify-center" aria-label="Aperçu des sauts de page"><svg class="size-[18px]" viewBox="0 0 18 18" fill="none" stroke="#333" stroke-width="1.300"><path d="M1 1h16v16H1zM1 10h11V1M6.500 1v9" /></svg></button>
      <button class="ml-[6px] h-px w-[10px] bg-[#333]" aria-label="Zoom arrière"></button>
      <input type="range" aria-label="Zoom" value="50" class="mx-[7px] h-px w-[125px] appearance-none bg-[#555] [&::-webkit-slider-thumb]:h-[14px] [&::-webkit-slider-thumb]:w-[6px] [&::-webkit-slider-thumb]:appearance-none [&::-webkit-slider-thumb]:bg-[#555]" />
      <button aria-label="Zoom avant"><svg class="size-[10px]" viewBox="0 0 10 10" stroke="#333" stroke-width="1.200"><path d="M5 0v10M0 5h10" /></svg></button>
      <span class="ml-4">100 %</span>
    </div>
  </section>

  <!-- Barre des tâches -->
  <footer class="grid h-[60px] shrink-0 grid-cols-[1fr_auto_1fr] items-center border-t border-[#444] bg-[#1c1c1c] whitespace-nowrap text-white">
    <div class="flex items-center gap-[10px] pl-6">
      <svg class="size-[30px]" viewBox="0 0 30 30"><path d="M12 0c6 3 8 10 4 15-3 4-10 5-16 1 8 0 13-7 12-16z" fill="#f5a623" /><path d="M7 29a7 7 0 0 1-1-13 8 8 0 0 1 16-1 7 7 0 0 1 1 14z" fill="#a9c4ef" /><path d="M7 29c-8-1-8-8-2-9 5-4 9-1 11 1 6-3 14 1 12 6-2 2-4 2-6 2z" fill="#d3e1f9" /></svg>
      <div class="leading-5">
        <p>12°C</p>
        <p class="text-[#ccc]">Ciel couvert</p>
      </div>
    </div>
    <div class="flex items-center pl-[9px]">
      <button class="mr-[18px]" aria-label="Démarrer"><svg class="size-[30px]" viewBox="0 0 30 30"><path d="M1 0h13v14H0V1a1 1 0 0 1 1-1zM15 0h14a1 1 0 0 1 1 1v13H15z" fill="#62cdfb" /><path d="M0 15h14v15H1a1 1 0 0 1-1-1zM15 15h15v14a1 1 0 0 1-1 1H15z" fill="#26a8fb" /></svg></button>
      <label class="mr-[6px] flex h-[38px] w-[273px] items-center gap-[13px] rounded-full bg-[#f3f3f3] px-[14px]">
        <svg class="size-[19px] shrink-0" viewBox="0 0 19 19" fill="none" stroke="#222" stroke-width="2"><circle cx="8" cy="8" r="7" /><path d="M13 13l5 5" /></svg>
        <input type="search" placeholder="Rechercher" aria-label="Rechercher dans Windows" class="w-full text-base outline-none placeholder:text-[#555]" />
      </label>
      <button class="relative flex h-[50px] w-[50px] items-center justify-center" aria-label="Explorateur">
        <svg class="size-[30px]" viewBox="0 0 30 30"><path d="M0 4a2 2 0 0 1 2-2h8l3 3h8v6H0z" fill="#d99a0b" /><path d="M0 8h11l3-3h14a2 2 0 0 1 2 2v20a1 1 0 0 1-1 1H1a1 1 0 0 1-1-1z" fill="#fdc937" /><path d="M5 28v-6a2 2 0 0 1 2-2h16a2 2 0 0 1 2 2v6z" fill="#0f7bc9" /><path d="M9 24h13" stroke="#0b4f87" stroke-width="1.500" /></svg>
        <span class="absolute bottom-0 h-1 w-2 rounded-full bg-[#999]"></span>
      </button>
      <button class="mx-[5px] flex size-[50px] items-center justify-center" aria-label="Teams">
        <svg class="size-[30px]" viewBox="0 0 30 30"><circle cx="12" cy="5" r="4.500" fill="#9a97f7" /><circle cx="23" cy="9" r="4" fill="#6f63e6" /><path d="M18 14h9a2 2 0 0 1 2 2v7c0 8-11 8-11 0z" fill="#5f48d6" /><path d="M6 11h11a2 2 0 0 1 2 2v14a2 2 0 0 1-2 2h-5c-5 0-8-3-8-7v-9a2 2 0 0 1 2-2z" fill="#8583f4" /><rect x="1" y="15" width="12" height="12" rx="2" fill="#3d39b5" /><path d="M4 18.500h6M7 18.500v6" stroke="#fff" stroke-width="1.800" /></svg>
      </button>
      <button class="relative flex size-[50px] items-center justify-center" aria-label="To Do">
        <svg class="size-[30px]" viewBox="0 0 30 30"><path d="M6 9l8 9-6 6-8-9z" fill="#1f55b5" /><path d="M24 3l5 6-18 18-5-6z" fill="#47a4f2" /></svg>
        <span class="absolute top-1 right-1 flex size-5 items-center justify-center rounded-full bg-[#4cc2ff] text-xs text-black">1</span>
      </button>
      <button class="mx-[5px] flex size-[50px] items-center justify-center" aria-label="Edge">
        <svg class="size-[30px]" viewBox="0 0 30 30"><defs><linearGradient id="eg"><stop offset="0" stop-color="#1fa8ea" /><stop offset="1" stop-color="#5fe04e" /></linearGradient></defs><circle cx="15" cy="15" r="15" fill="#0f6fce" /><path d="M0 13C2-4 29-4 30 13c0 6-6 9-10 7-3-2 0-3-1-6-1-5-9-7-13-5-3 1-5 2-6 4z" fill="url(#eg)" /><path d="M12 15c-3 8 5 14 15 8-3 5-8 7-12 7C5 29 6 17 12 15z" fill="#0c4fa3" /><path d="M16 12c-4 3-3 9 3 10 5 1 8 0 10-2l2-3c-3 3-11 4-12 1 1-2 1-4-3-6z" fill="#1c1c1c" /></svg>
      </button>
      <button class="flex size-[50px] items-center justify-center" aria-label="Adobe Express">
        <svg class="size-[30px]" viewBox="0 0 30 30"><defs><linearGradient id="ax" x1="0" y1="1" x2="1" y2="0"><stop offset="0" stop-color="#4a7bff" /><stop offset=".35" stop-color="#e85bf0" /><stop offset=".6" stop-color="#ff3030" /><stop offset="1" stop-color="#ffa000" /></linearGradient></defs><rect width="30" height="30" rx="5" fill="#000b1d" /><path d="M9 21l5-12h2l5 12h-2.500L15 13" fill="none" stroke="url(#ax)" stroke-width="3.500" stroke-linejoin="round" stroke-linecap="round" /></svg>
      </button>
      <button class="relative mx-[5px] flex size-[50px] items-center justify-center" aria-label="Firefox">
        <svg class="size-[30px]" viewBox="0 0 30 30"><defs><linearGradient id="ff" x1="1" y1="0" x2="0" y2="1"><stop offset="0" stop-color="#ffe14a" /><stop offset=".5" stop-color="#ff8a1f" /><stop offset="1" stop-color="#f5156c" /></linearGradient></defs><path d="M19 0c2 4 4 4 5 8l2-2c4 6 4 13 1 18-6 8-18 8-24 0C0 19 0 11 4 6l1 3 3-3v3l3 1c3-4 5-6 8-10z" fill="url(#ff)" /><circle cx="15" cy="15" r="6.500" fill="#7a42dc" /><path d="M8 9c4-1 6 1 8 2-1 2-3 2-3 4 2 3 6 2 9 0-2 9-14 9-15 1z" fill="#ff9a1f" /></svg>
        <span class="absolute bottom-0 h-1 w-2 rounded-full bg-[#999]"></span>
      </button>
      <button class="relative flex size-[50px] items-center justify-center rounded-md border border-[#363636] bg-[#2b2b2b]" aria-label="Excel">
        <svg class="size-7"><use href="#excel" /></svg>
        <span class="absolute bottom-0 h-1 w-5 rounded-full bg-[#4cc2ff]"></span>
      </button>
    </div>
    <div class="flex items-center justify-end pr-[25px]">
      <button class="mr-[23px]" aria-label="Icônes masquées"><svg class="h-2 w-[14px]" viewBox="0 0 14 8" fill="none" stroke="#fff" stroke-width="1.700"><path d="M1 7.500l6-6 6 6" /></svg></button>
      <svg class="mr-[19px] size-5" viewBox="0 0 20 20"><path d="M10 0l9 3v6c0 6-5 9-9 11-4-2-9-5-9-11V3z" fill="#1b8fe0" /><path d="M10 0v20c-4-2-9-5-9-11V3z" fill="#42b6f5" /><circle cx="14.500" cy="14.500" r="5.500" fill="#128a1f" /><path d="M12 14.500l2 2 3.500-4" fill="none" stroke="#fff" stroke-width="1.300" /></svg>
      <svg class="mr-[10px] size-5" viewBox="0 0 20 20" fill="none" stroke-width="1.500"><path d="M1 8c5-6 13-6 18 0" stroke="#555" /><path d="M4 11c4-4 8-4 12 0" stroke="#777" /><path d="M6.500 13.500c2-2 5-2 7 0" stroke="#fff" /><circle cx="10" cy="16" r="1.800" fill="#fff" /></svg>
      <svg class="mr-[10px] size-5" viewBox="0 0 20 20" fill="none" stroke="#fff" stroke-width="1.400"><path d="M1 7v6h3l5 4V3L4 7zM12 7c1.500 2 1.500 4 0 6M14.500 5c2.500 3 2.500 7 0 10" /><path d="M17 3c4 4 4 10 0 14" stroke="#555" /></svg>
      <svg class="mr-6 size-5" viewBox="0 0 20 20"><path d="M7 5h9a2 2 0 0 1 2 2v8a2 2 0 0 1-2 2H4a2 2 0 0 1-2-2v-4z" fill="#fff" /><path d="M18 9h2v4h-2z" fill="#fff" /><path d="M4 0L0 8h3l-1 6 6-8H5l2-6z" fill="#fff" stroke="#1c1c1c" stroke-width="1.200" /></svg>
      <div class="mr-[10px] text-right leading-5"><p>19:02</p><p>01/11/2025</p></div>
      <svg class="size-5" viewBox="0 0 20 20"><path d="M3 9c0-8 12-8 12 0v4l2 3H1l2-3zM6 17h6c-1 3-5 3-6 0z" fill="#fff" /><path d="M6 7h5l-5 6h5" fill="none" stroke="#1c1c1c" stroke-width="1.500" /><path d="M14 1h5l-5 5h5" fill="none" stroke="#fff" stroke-width="1.400" /></svg>
    </div>
  </footer>

<script>
  // Contenu des lignes : [A, B, C, D]
  const donnees = {
    1: ["MÉTRIQUE", "VALEUR", "MAXIMUM", "POURCENTAGE"],
    2: ["SCORE TOTAL", "60", "121", "50%"],
    4: ["Score Information de Base", "19", "27", "70%"],
    5: ["Score Photos et Médias", "9", "19", "47%"],
    6: ["Score Avis Clients", "3", "23", "13%"],
    7: ["Score Posts et Actualités", "6", "14", "43%"],
    8: ["Score Produits et Services", "2", "7", "29%"],
    9: ["Score Attributs et Fonctionnalités", "9", "9", "100%"],
    10: ["Score Cohérence Technique", "12", "22", "55%"],
    12: ["ÉVALUATION GLOBALE", "MOYEN", "", ""],
    13: ["NIVEAU D'OPTIMISATION", "Intermédiaire", "", ""],
    15: ["Critères S-Tier complétés", "9", "16", "56%"],
    16: ["Critères A-Tier complétés", "9", "18", "50%"],
    17: ["Critères B-Tier complétés", "3", "7", "43%"],
    19: ["Actions S-TIER restantes", "6", "", ""],
    20: ["Actions A-TIER restantes", "9", "", ""],
    21: ["Actions B-TIER restantes", "3", "", ""]
  };
  const colonnes = "ABCDEFGHIJKLMN".split("");
  const alerte = '<svg class="mr-2 ml-[3px] inline h-5 w-[22px] align-[-3px]" viewBox="0 0 22 20" fill="none" stroke="#00f" stroke-width="2"><path d="M11 1.500L1.500 18.500h19zM11 7v6M11 15v2" /></svg>';

  document.getElementById("colonnes").innerHTML =
    '<th class="border-r border-b border-[#ababab] bg-[#efefef] p-0"><svg class="ml-[14px] size-4 fill-[#dcdcdc]" viewBox="0 0 16 16"><path d="M16 0v16H0z" /></svg></th>' +
    colonnes.map(c => c === "I"
      ? '<th class="border-r border-b-2 border-r-[#bbb] border-b-[#1e7145] bg-[#e0e0e0] p-0 font-normal text-[#1e7145]">I</th>'
      : '<th class="border-r border-b border-r-[#d8d8d8] border-b-[#ababab] bg-[#efefef] p-0 font-normal text-[#444]">' + c + '</th>').join("");

  function cellule(n, i, texte) {
    if (n === 1 && i < 4) return '<td class="bg-[#1f4e78] p-0 text-center font-bold text-white">' + texte + '</td>';
    if (n === 2 && i === 0) return '<td class="bg-[#e5e5e5] py-0 pr-1 pl-[3px] text-xl leading-6 font-bold">' + texte + '</td>';
    if (n === 2 && i === 1) return '<td class="bg-[#e5e5e5] py-0 pr-1 pl-[3px] text-right text-xl leading-6 font-bold text-[#f00]">' + texte + '</td>';
    if (n === 12 && i === 0) return '<td class="border-r border-b border-[#dcdcdc] py-0 pr-1 pl-[3px] text-[17px] leading-5 font-bold">' + texte + '</td>';
    if (n === 12 && i === 1) return '<td class="border-r border-b border-[#dcdcdc] py-0 pr-1 pl-[3px] text-[17px] leading-5 font-bold text-[#00f]">' + alerte + texte + '</td>';
    if (n === 16 && i === 8) return '<td class="relative border-r border-b border-[#dcdcdc] p-0"><div class="absolute -inset-[2px] border-2 border-[#1e7145]"></div><div class="absolute -right-[3px] -bottom-[3px] size-[6px] border border-white bg-[#1e7145]"></div></td>';
    const droite = i > 0 && /^\d/.test(texte);
    return droite
      ? '<td class="border-r border-b border-[#dcdcdc] px-[3px] pt-0 pb-px text-right align-bottom">' + texte + '</td>'
      : '<td class="border-r border-b border-[#dcdcdc] px-[3px] pt-0 pb-px align-bottom">' + texte + '</td>';
  }

  let html = "";
  for (let n = 1; n <= 26; n++) {
    const ligne = donnees[n] || [];
    html += n === 2 ? '<tr class="h-[30px]">' : n === 12 ? '<tr class="h-[26px]">' : '<tr class="h-6">';
    html += n === 16
      ? '<th class="border-r-2 border-b border-r-[#1e7145] border-b-[#bbb] bg-[#e0e0e0] p-0 pb-px align-bottom font-normal text-[#1e7145]">16</th>'
      : '<th class="border-r border-b border-r-[#ababab] border-b-[#d8d8d8] bg-[#efefef] p-0 pb-px align-bottom font-normal text-[#444]">' + n + '</th>';
    colonnes.forEach((c, i) => html += cellule(n, i, ligne[i] || ""));
    html += "</tr>";
  }
  document.getElementById("lignes").innerHTML = html;
</script>
</body>
</html>
